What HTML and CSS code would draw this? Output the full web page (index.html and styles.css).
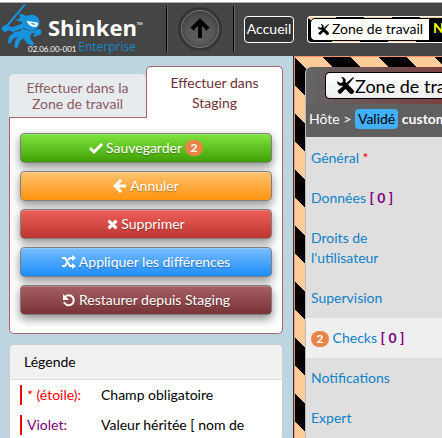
FILE: index.html
```html
<!DOCTYPE html>
<html lang="fr">
<head>
    <meta charset="UTF-8">
    <meta name="viewport" content="width=device-width, initial-scale=1.0">
    <title>Shinken Enterprise</title>
    <link rel="stylesheet" href="styles.css">
</head>
<body>
    <svg class="sprite" aria-hidden="true">
        <symbol id="tools" viewBox="0 0 20 20">
            <path d="M5 0c4 0 6 3 5 6l9 9a2.5 2.5 0 0 1-4 4L6 10c-3 1-6-1-6-5l4 2 3-1V3z"/>
            <path d="M19 0l1 1-7 8-2-2zM8 10l3 3-6 6c-2 2-5-1-4-3z"/>
        </symbol>
    </svg>

    <header class="topbar">
        <div class="logo">
            <svg class="logo-ninja" viewBox="0 6 144 162" aria-hidden="true">
                <g fill="#1593dc">
                    <path d="M72 12l5 3-55 66-10 7-4-4 10-8z"/>
                    <path d="M4 88c2-10 12-16 20-12l12 6 34-12 4 12-34 14-14-5-12 6z"/>
                    <path d="M58 40l22 8c16-9 34-2 38 14 3 14-5 27-20 29-18 2-32-8-33-25l-19-6 14-5z"/>
                    <path d="M64 82c10 10 26 13 44 8l10-4c8 4 10 12 2 18l-18 7-3-5 9-7-12 1c-6 6-6 12-4 18l10 12-4 8-18-9-10-14-10 8-8 22-9-3 2-18 8-14-14 7-8 14-7-3 3-17 16-15 19-3z"/>
                </g>
                <path fill="#fff" d="M80 62l34 6c1 6-2 11-8 13-12 0-22-7-26-19z"/>
                <path fill="#1593dc" d="M90 68l16 3-4 5z"/>
            </svg>
            <div class="logo-text">
                <span class="logo-name">Shinken<sup>™</sup></span>
                <span class="logo-sub">Enterprise</span>
            </div>
            <span class="version">02.06.00-001</span>
        </div>
        <div class="up-box">
            <button class="up-btn" type="button" aria-label="Haut">
                <svg viewBox="0 0 20 22"><path d="M10 20V3M2 11l8-8 8 8" fill="none" stroke="#000" stroke-width="4"/></svg>
            </button>
        </div>
        <button class="home-btn" type="button">Accueil</button>
        <div class="zone-switch stripes">
            <span class="zone-label"><svg class="icon-tools"><use href="#tools"/></svg>Zone de travail</span>
            <span class="zone-new">N</span>
        </div>
    </header>

    <div class="page">
        <aside class="sidebar">
            <div class="tabs">
                <button class="tab" type="button">Effectuer dans la Zone de travail</button>
                <button class="tab active" type="button">Effectuer dans Staging</button>
            </div>
            <div class="actions">
                <button class="btn btn-save" type="button">
                    <svg viewBox="0 0 14 14"><path d="M1 7l4 4 8-8" fill="none" stroke="#fff" stroke-width="3"/></svg>
                    Sauvegarder <span class="count">2</span>
                </button>
                <button class="btn btn-cancel" type="button">
                    <svg viewBox="0 0 14 14"><path d="M13 7H3M8 1L2 7l6 6" fill="none" stroke="#fff" stroke-width="3"/></svg>
                    Annuler
                </button>
                <button class="btn btn-delete" type="button">
                    <svg class="small" viewBox="0 0 14 14"><path d="M2 2l10 10M12 2L2 12" fill="none" stroke="#fff" stroke-width="4"/></svg>
                    Supprimer
                </button>
                <button class="btn btn-apply" type="button">
                    <svg viewBox="0 0 14 14"><path d="M0 3h3l5 8h3M0 11h3l2-3M6 5l2-2h3" fill="none" stroke="#fff" stroke-width="2"/><path fill="#fff" d="M10 0l4 3-4 3zM10 8l4 3-4 3z"/></svg>
                    Appliquer les différences
                </button>
                <button class="btn btn-restore" type="button">
                    <svg viewBox="0 0 14 14"><path d="M3 4a5 5 0 1 1-1 5" fill="none" stroke="#fff" stroke-width="2"/><path fill="#fff" d="M1 1v6h6z"/></svg>
                    Restaurer depuis Staging
                </button>
            </div>

            <section class="legend">
                <h2>Légende</h2>
                <dl>
                    <div class="legend-row">
                        <dt class="required">* (étoile):</dt>
                        <dd>Champ obligatoire</dd>
                    </div>
                    <div class="legend-row">
                        <dt class="inherited">Violet:</dt>
                        <dd>Valeur héritée [ nom de</dd>
                    </div>
                </dl>
            </section>
        </aside>

        <main class="workspace stripes">
            <div class="object">
                <div class="object-head">
                    <span class="object-zone"><svg class="icon-tools"><use href="#tools"/></svg>Zone de travail</span>
                </div>
                <div class="object-path">
                    Hôte &gt; <span class="state">Validé</span> <b>custom</b>
                </div>
                <nav class="menu">
                    <a href="#">Général <span class="star">*</span></a>
                    <a href="#">Données <b>[ 0 ]</b></a>
                    <a href="#">Droits de l'utilisateur</a>
                    <a href="#">Supervision</a>
                    <a href="#" class="current"><span class="count">2</span> Checks <b>[ 0 ]</b></a>
                    <a href="#">Notifications</a>
                    <a href="#">Expert</a>
                </nav>
            </div>
        </main>
    </div>
</body>
</html>
```
FILE: styles.css
```css
* {
    box-sizing: border-box;
}

html, body {
    height: 100%;
}

body {
    margin: 0;
    display: flex;
    flex-direction: column;
    overflow: hidden;
    background: #bdd5e1;
    color: #000;
    font-family: Lato, "Liberation Sans", sans-serif;
    font-size: 14px;
    line-height: 20px;
}

button {
    font: inherit;
    padding: 0;
    cursor: pointer;
}

.sprite {
    display: none;
}

.stripes {
    background: linear-gradient(45deg, #ffcc99 25%, #000 25%, #000 50%, #ffcc99 50%, #ffcc99 75%, #000 75%) 0 0 / 56px 56px;
}

/* top bar */

.topbar {
    flex: none;
    height: 56px;
    display: flex;
    align-items: center;
    background: #454545;
    border-top: 2px solid #fff;
    box-shadow: inset 0 1px #aaa;
}

.logo {
    position: relative;
    flex: none;
    width: 166px;
    height: 54px;
    display: flex;
}

.logo-ninja {
    flex: none;
    width: 48px;
    height: 54px;
}

.logo-text {
    width: 96px;
    padding-top: 13px;
    font-family: "Open Sans", sans-serif;
}

.logo-name {
    display: block;
    color: #fff;
    font-size: 22px;
    font-weight: bold;
    line-height: 24px;
    white-space: nowrap;
}

.logo-name sup {
    font-size: 8px;
    font-weight: normal;
    line-height: 8px;
}

.logo-sub {
    display: block;
    padding-right: 8px;
    color: #1688cc;
    font-size: 12px;
    line-height: 16px;
    text-align: right;
}

.version {
    position: absolute;
    left: 28px;
    bottom: 2px;
    color: #fff;
    font-size: 8px;
    line-height: 10px;
}

.up-box {
    flex: none;
    width: 68px;
    height: 46px;
    display: flex;
    align-items: center;
    justify-content: center;
    border-left: 1px solid #000;
    border-right: 1px solid #000;
    box-shadow: inset 1px 0 #666, 1px 0 #666;
}

.up-btn {
    width: 38px;
    height: 38px;
    border: 1px solid #777;
    border-radius: 50%;
    background: linear-gradient(#4c4c4c, #606060);
    box-shadow: 0 0 0 3px #353535, inset 0 0 5px #333;
}

.up-btn svg {
    display: block;
    width: 20px;
    height: 22px;
    margin: 0 auto;
}

.home-btn {
    flex: none;
    width: 50px;
    height: 27px;
    margin-left: 10px;
    border: 1px solid #fff;
    border-radius: 4px;
    background: #333;
    color: #fff;
}

.zone-switch {
    flex: 1;
    display: flex;
    min-width: 0;
    height: 27px;
    margin-left: 13px;
    padding: 1px 0 1px 2px;
    border: 1px solid #fff;
    border-right: 0;
    border-radius: 4px 0 0 4px;
    overflow: hidden;
}

.zone-label {
    flex: none;
    display: flex;
    align-items: center;
    width: 120px;
    padding-left: 7px;
    border: 1px solid #000;
    border-radius: 5px 0 0 5px;
    background: #fff;
    white-space: nowrap;
}

.icon-tools {
    flex: none;
    width: 11px;
    height: 11px;
    margin-right: 3px;
}

.zone-new {
    flex: 1;
    padding-left: 3px;
    background: #000;
    color: #ff0;
    font-weight: bold;
}

/* left column */

.page {
    flex: 1;
    display: flex;
    min-height: 0;
}

.sidebar {
    flex: none;
    width: 294px;
    padding: 10px 11px 0 9px;
}

.tabs {
    display: flex;
    align-items: flex-end;
}

.tab {
    width: 50%;
    height: 44px;
    padding: 0 12px;
    border: 0;
    border-bottom: 1px solid #aa6565;
    border-radius: 5px 5px 0 0;
    background: #e7ebee;
    color: #8b5a5f;
    line-height: 16px;
}

.tab.active {
    height: 52px;
    padding: 0 20px;
    border: 1px solid #aa6565;
    border-bottom: 0;
    background: #fff;
    color: #6d3038;
    line-height: 20px;
}

.actions {
    display: flex;
    flex-direction: column;
    gap: 8px;
    padding: 15px 10px 18px;
    border: 1px solid #aa6565;
    border-top: 0;
    border-radius: 0 0 5px 5px;
    background: #fff;
}

.btn {
    display: flex;
    align-items: center;
    justify-content: center;
    gap: 3px;
    height: 30px;
    border: 1px solid #808080;
    border-radius: 4px;
    color: #fff;
    text-shadow: 0 1px 1px rgba(0,0,0,0.3);
    box-shadow: 0 4px 10px rgba(0,0,0,0.45), inset 0 1px rgba(255,255,255,0.2);
}

.btn svg {
    width: 14px;
    height: 14px;
}

.btn svg.small {
    width: 11px;
    height: 11px;
}

.btn-save { background: linear-gradient(#7fe53f, #3f9f05); }
.btn-cancel { background: linear-gradient(#fdc372, #ff930f); }
.btn-delete { background: linear-gradient(#ee5f5b, #bd362f); }
.btn-apply { background: linear-gradient(#78bdff, #1e8dfa); }
.btn-restore { background: linear-gradient(#a66063, #793338); }

.count {
    display: inline-block;
    width: 18px;
    border-radius: 8px;
    background: #e98447;
    color: #fff;
    font-size: 12px;
    font-weight: bold;
    line-height: 16px;
    text-align: center;
    text-shadow: none;
}

.legend {
    margin-top: 10px;
    border: 1px solid #ccc;
    border-radius: 5px;
    background: #fff;
}

.legend h2 {
    margin: 0;
    padding: 7px 14px;
    border-bottom: 1px solid #ddd;
    border-radius: 5px 5px 0 0;
    background: #f1f1f1;
    font-size: 14px;
    font-weight: normal;
}

.legend dl {
    display: flex;
    flex-direction: column;
    gap: 10px;
    margin: 0;
    padding: 5px 10px;
}

.legend-row {
    display: flex;
    border-left: 2px solid #f00;
}

.legend dt {
    width: 79px;
    padding-left: 5px;
}

.legend dd {
    margin: 0;
}

.required { color: #f00; }
.inherited { color: #800080; }

/* right part, cut by the window on narrow screens */

.workspace {
    flex: 1;
    min-width: 0;
    padding: 10px 0 0 10px;
    border: solid #ff9070;
    border-width: 1px 0 0 1px;
    box-shadow: -1px 0 #333;
    overflow: hidden;
}

.object {
    height: 100%;
    border-left: 1px solid #bbb;
    border-radius: 6px 0 0 0;
    background: #dfdfdf;
    overflow: hidden;
    white-space: nowrap;
}

.object-head {
    padding: 5px 0 5px 19px;
    background: linear-gradient(90deg, #656565, #7a4040);
}

.object-zone {
    display: flex;
    align-items: center;
    height: 27px;
    padding-left: 11px;
    border: 1px solid #000;
    border-right: 0;
    border-radius: 5px 0 0 5px;
    background: linear-gradient(#fff, #eee);
    font-size: 18px;
    overflow: hidden;
}

.object-zone .icon-tools {
    width: 17px;
    height: 17px;
    margin-right: 1px;
}

.object-path {
    height: 33px;
    padding: 5px 3px;
    background: #606060;
    color: #fff;
}

.state {
    display: inline-block;
    padding: 0 3px;
    border-radius: 4px;
    background: #40b0ff;
    color: #000;
}

.menu {
    padding-top: 1px;
    white-space: normal;
}

.menu a {
    display: block;
    padding: 10px 14px 10px 5px;
    color: #0f82c8;
    text-decoration: none;
}

.menu .current {
    background: #efefef;
}

.menu b { color: #800080; }
.star { color: #f00; }
```
